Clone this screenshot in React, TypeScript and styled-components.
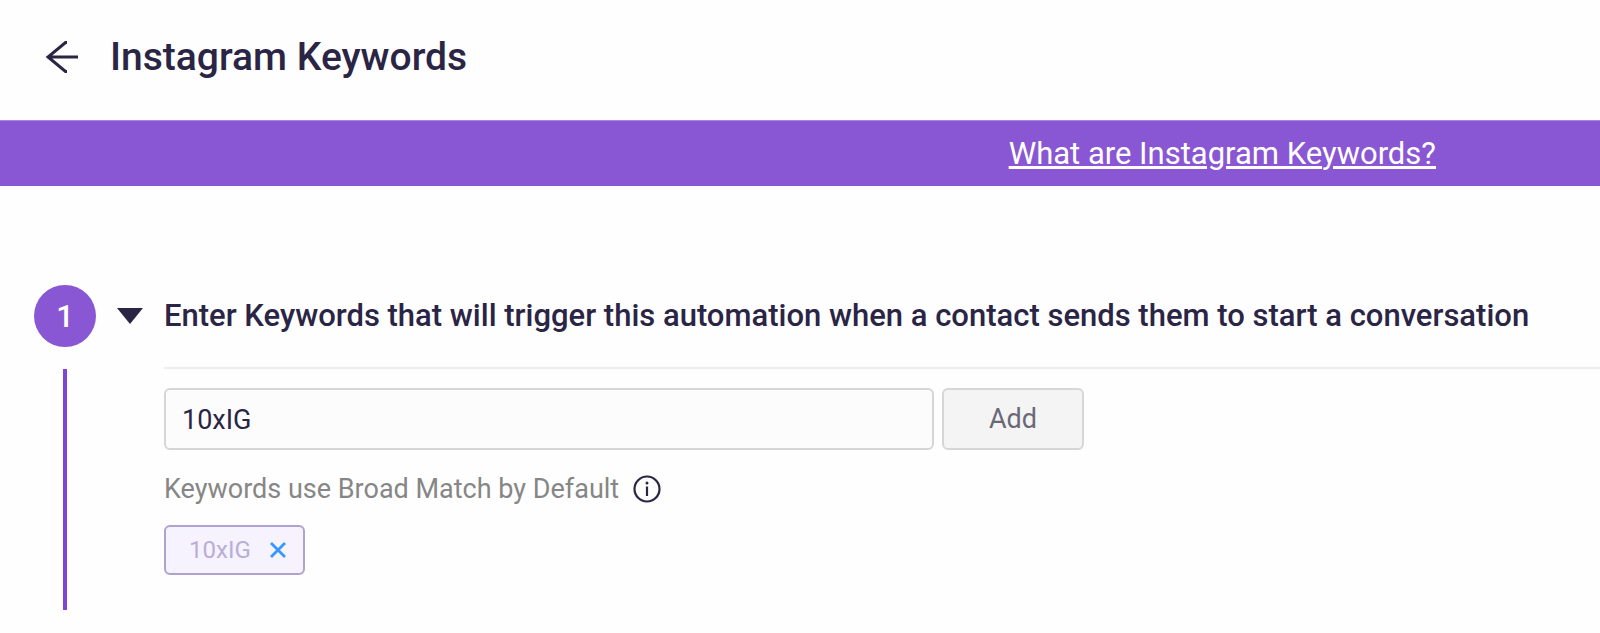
import React, { useState } from "react";
import styled, { createGlobalStyle } from "styled-components";

const GlobalStyle = createGlobalStyle`
  *, *::before, *::after { box-sizing: border-box; }
  body {
    margin: 0;
    background: #fefefe;
    color: #2b2545;
    font-family: Roboto, "Liberation Sans", sans-serif;
  }
  button, input { font: inherit; color: inherit; }
  button { cursor: pointer; }
`;

const Header = styled.header`
  display: flex;
  align-items: center;
  gap: 26px;
  height: 120px;
  padding: 0 40px 6px;
`;

const IconButton = styled.button`
  display: flex;
  align-items: center;
  justify-content: center;
  flex: none;
  padding: 0;
  border: 0;
  background: none;
`;

const Title = styled.h1`
  margin: 0;
  font-size: 39px;
  line-height: 48px;
  font-weight: 500;
`;

const Banner = styled.div`
  display: flex;
  align-items: center;
  justify-content: flex-end;
  height: 66px;
  padding: 0 164px;
  background: #8957d4;
  border-top: 1px solid #a885e0;
`;

const BannerLink = styled.a`
  color: #fff;
  font-size: 31px;
  line-height: 40px;
  text-decoration: underline;
`;

const Step = styled.section`
  display: grid;
  grid-template-columns: 60px minmax(0, 1fr);
  column-gap: 20px;
  padding: 99px 0 24px 35px;
`;

const Rail = styled.div`
  display: flex;
  flex-direction: column;
  align-items: center;
  gap: 22px;
`;

const StepNumber = styled.div`
  display: flex;
  align-items: center;
  justify-content: center;
  flex: none;
  width: 62px;
  height: 62px;
  border-radius: 50%;
  background: #8957d4;
  color: #fff;
  font-size: 31px;
  font-weight: 500;
`;

const RailLine = styled.div`
  flex: 1;
  width: 4px;
  background: #7e45d4;
`;

const StepHeader = styled.div`
  display: flex;
  align-items: center;
  gap: 19px;
  height: 62px;
`;

const StepTitle = styled.h2`
  margin: 0;
  font-size: 31px;
  line-height: 40px;
  font-weight: 500;
`;

const StepBody = styled.div`
  margin: 20px 0 0 49px;
  padding: 19px 0 35px;
  border-top: 2px solid #eeeeee;
`;

const KeywordForm = styled.form`
  display: flex;
  gap: 8px;
  padding-right: 24px;
`;

const KeywordInput = styled.input`
  flex: 0 1 770px;
  min-width: 0;
  height: 62px;
  padding: 2px 16px 0;
  border: 2px solid #d6d6d6;
  border-radius: 6px;
  background: #fcfcfc;
  font-size: 27px;
`;

const AddButton = styled.button`
  flex: none;
  width: 142px;
  height: 62px;
  padding: 0;
  border: 2px solid #d6d6d6;
  border-radius: 6px;
  background: #f4f4f4;
  color: #6b6877;
  font-size: 27px;
`;

const Hint = styled.div`
  display: flex;
  align-items: center;
  gap: 14px;
  margin: 21px 0 18px;
  color: #868686;
  font-size: 27px;
  line-height: 36px;
`;

const Tag = styled.div`
  display: inline-flex;
  align-items: center;
  gap: 19px;
  height: 50px;
  padding: 0 17px 0 23px;
  border: 2px solid #aea2cf;
  border-radius: 6px;
  background: #f6f2fe;
  color: #b9aed6;
  font-size: 24px;
`;

export default function App() {
  const [keyword, setKeyword] = useState("10xIG");
  const [open, setOpen] = useState(true);
  const [tags, setTags] = useState(["10xIG"]);

  const addTag = (event: React.FormEvent) => {
    event.preventDefault();
    if (keyword && !tags.includes(keyword)) setTags([...tags, keyword]);
  };

  return (
    <>
      <GlobalStyle />
      <Header>
        <IconButton type="button" aria-label="Back">
          <svg width="44" height="36" viewBox="0 0 44 36" fill="none" stroke="#2b2545" strokeWidth="3">
            <path d="M38 18H8M27 3.5h-1.5L8 18l17.5 14.5H27" />
          </svg>
        </IconButton>
        <Title>Instagram Keywords</Title>
      </Header>
      <Banner>
        <BannerLink href="#keywords">What are Instagram Keywords?</BannerLink>
      </Banner>
      <Step id="keywords">
        <Rail>
          <StepNumber>1</StepNumber>
          <RailLine />
        </Rail>
        <div>
          <StepHeader>
            <IconButton type="button" aria-label="Toggle step" aria-expanded={open} onClick={() => setOpen(!open)}>
              <svg width="30" height="20" viewBox="0 0 30 20">
                <path d="M2 2h26L15 18z" fill="#2b2545" />
              </svg>
            </IconButton>
            <StepTitle>Enter Keywords that will trigger this automation when a contact sends them to start a conversation</StepTitle>
          </StepHeader>
          {open && (
            <StepBody>
              <KeywordForm onSubmit={addTag}>
                <KeywordInput
                  aria-label="Keyword"
                  value={keyword}
                  onChange={(event) => setKeyword(event.target.value)}
                />
                <AddButton type="submit">Add</AddButton>
              </KeywordForm>
              <Hint>
                Keywords use Broad Match by Default
                <IconButton type="button" aria-label="About Broad Match">
                  <svg width="28" height="28" viewBox="0 0 28 28" fill="none" stroke="#2b2545">
                    <circle cx="14" cy="14" r="12.5" strokeWidth="2.2" />
                    <path d="M14 11.5v9.5" strokeWidth="2.2" />
                    <circle cx="14" cy="8" r="1.5" fill="#2b2545" stroke="none" />
                  </svg>
                </IconButton>
              </Hint>
              {tags.map((tag) => (
                <Tag key={tag}>
                  {tag}
                  <IconButton
                    type="button"
                    aria-label={`Remove ${tag}`}
                    onClick={() => setTags(tags.filter((item) => item !== tag))}
                  >
                    <svg width="16" height="16" viewBox="0 0 16 16" fill="none" stroke="#3399ff" strokeWidth="2.8">
                      <path d="M1 1l14 14M15 1L1 15" />
                    </svg>
                  </IconButton>
                </Tag>
              ))}
            </StepBody>
          )}
        </div>
      </Step>
    </>
  );
}
